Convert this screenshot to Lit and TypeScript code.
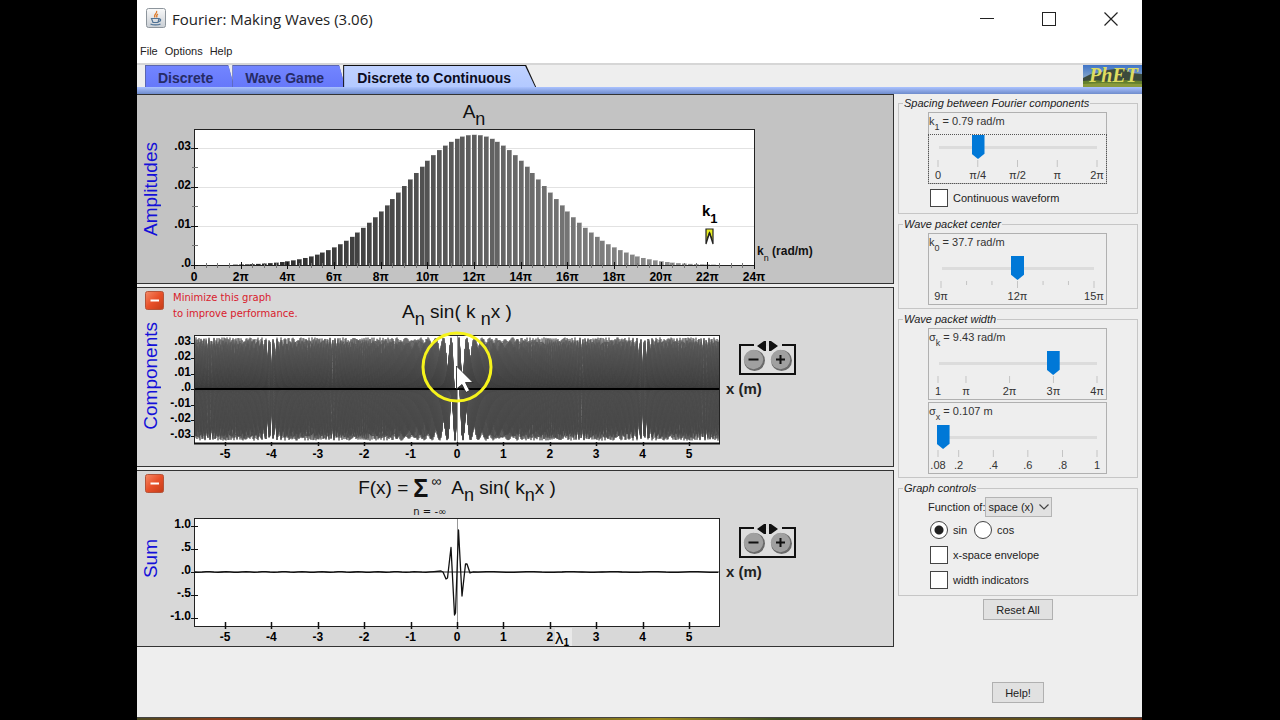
import { LitElement, html, svg, css, nothing } from "lit";
import { customElement, property } from "lit/decorators.js";

const COMPONENTS = 96;
const SIGMA = 12;
const CENTER = 48;
const PEAK = 0.0333;

const amplitude = (n: number) => PEAK * Math.exp(-((n - CENTER) ** 2) / (2 * SIGMA * SIGMA));
const shade = (n: number) => {
  const v = Math.round(26 + (n / COMPONENTS) * 136);
  return `rgb(${v},${v},${v})`;
};

interface Tick {
  at: number;
  text?: string;
}

@customElement("slider-box")
class SliderBox extends LitElement {
  @property() symbol = "";
  @property() sub = "";
  @property() reading = "";
  @property({ type: Number }) value = 0;
  @property({ attribute: false }) ticks: Tick[] = [];
  @property({ type: Boolean }) active = false;
  @property({ type: Boolean }) inset = false;

  static styles = css`
    :host { display: block; border: 1px solid #b0b0b0; font: 11px "Liberation Sans", Arial, sans-serif; color: #333; }
    .reading { display: block; height: 22px; line-height: 16px; white-space: nowrap; }
    .reading sub { font-size: 9px; line-height: 0; vertical-align: -5px; }
    .control { padding: 0 3px; }
    .control.inset { padding: 0 6px; }
    .control.active { outline: 1px dotted #555; }
    input {
      appearance: none; display: block; width: 100%; height: 24px; margin: 0;
      background: linear-gradient(#dcdcdc, #dcdcdc) center / calc(100% - 13px) 3px no-repeat;
      outline: none;
    }
    input::-webkit-slider-thumb {
      appearance: none; width: 13px; height: 24px; background: #0078d7;
      clip-path: polygon(0 0, 100% 0, 100% 78%, 50% 100%, 0 78%);
    }
    .scale { padding: 0 6px; }
    svg { display: block; width: 100%; height: 24px; overflow: visible; }
    line { stroke: #c4c4c4; }
    text { fill: #333; text-anchor: middle; }
  `;

  render() {
    return html`
      <label class="reading" for="range">${this.symbol}<sub>${this.sub}</sub> = ${this.reading}</label>
      <div class="control ${this.active ? "active" : ""} ${this.inset ? "inset" : ""}">
        <input id="range" type="range" min="0" max="100" step="0.1" .value=${String(this.value)} />
        <div class="scale">
          <svg aria-hidden="true">
            ${this.ticks.map(
              (t) => svg`<line x1="${t.at}%" x2="${t.at}%" y1="1" y2=${t.text ? 8 : 5}></line>
                ${t.text ? svg`<text x="${t.at}%" y="20">${t.text}</text>` : nothing}`
            )}
          </svg>
        </div>
      </div>
    `;
  }
}

@customElement("zoom-control")
class ZoomControl extends LitElement {
  static styles = css`
    :host { display: block; position: relative; width: 57px; height: 31px; }
    .frame { position: absolute; left: 0; top: -4px; }
    .buttons { position: relative; display: flex; justify-content: space-between; padding: 5px 4px 0; }
    button { width: 22px; height: 22px; padding: 0; border: 0; background: none; }
    button svg { display: block; }
  `;

  render() {
    const disc = (plus: boolean) => html`<svg width="22" height="22" viewBox="0 0 22 22">
      <circle cx="11.5" cy="11.5" r="10.5" fill="#6a6a6a"></circle>
      <circle cx="10.5" cy="10.5" r="9.7" fill="#a0a0a0"></circle>
      <path d=${plus ? "M6 10.500H15M10.500 6V15" : "M5.500 10.500H15.500"} stroke="#111" stroke-width="2"></path>
    </svg>`;
    return html`
      <svg class="frame" width="57" height="35" viewBox="0 0 57 35">
        <path d="M2 6H55V33H2Z" fill="#dedede"></path>
        <path d="M15 5H1V34H56V5H43" fill="none" stroke="#111" stroke-width="2"></path>
        <path d="M27 1V11H25L18 6L25 1ZM30 1H32L39 6L32 11H30Z" fill="#111"></path>
      </svg>
      <div class="buttons">
        <button aria-label="Zoom out">${disc(false)}</button>
        <button aria-label="Zoom in">${disc(true)}</button>
      </div>
    `;
  }
}

@customElement("amplitude-plot")
class AmplitudePlot extends LitElement {
  static styles = css`
    :host { display: block; }
    svg { display: block; overflow: visible; font: bold 12px "Liberation Sans", Arial, sans-serif; }
    .x { text-anchor: middle; }
    .y { text-anchor: end; }
  `;

  render() {
    const px = (n: number) => (n * 560) / 96;
    const py = (a: number) => 136 - a * 3910;
    return html`<svg width="560" height="154" role="img" aria-label="Amplitudes">
      <rect width="560" height="136" fill="#fff"></rect>
      ${[0.01, 0.02, 0.03].map((a) => svg`<path d="M0 ${Math.round(py(a)) + 0.5}H560" stroke="#e2e2e2"></path>`)}
      ${Array.from({ length: COMPONENTS }, (_, i) => i + 1).map((n) => {
        const top = py(amplitude(n));
        if (136 - top < 0.3) return nothing;
        return svg`<rect x=${Math.round(px(n)) - 2} y=${top} width="5" height=${136 - top} fill=${shade(n)}></rect>
          <rect x=${Math.round(px(n)) + 2} y=${top} width="1" height=${136 - top} fill="#fff" opacity=".35"></rect>`;
      })}
      <rect x=".5" y=".5" width="560" height="136" fill="none" stroke="#222"></rect>
      ${Array.from({ length: 49 }, (_, i) => i).map(
        (i) => svg`<path d="M${Math.round(px(i * 2)) + 0.5} ${i % 4 ? 134 : 133}V${i % 4 ? 139 : 140}" stroke=${i % 4 ? "#777" : "#111"}></path>`
      )}
      ${Array.from({ length: 13 }, (_, i) => i).map(
        (i) => svg`<text class="x" x=${px(i * 8)} y="152">${i ? `${i * 2}π` : "0"}</text>`
      )}
      ${[0, 0.005, 0.01, 0.015, 0.02, 0.025, 0.03].map(
        (a, i) => svg`<path d="M${i % 2 ? -2 : -3} ${Math.round(py(a)) + 0.5}H4" stroke=${i % 2 ? "#777" : "#111"}></path>`
      )}
      ${[".0", ".01", ".02", ".03"].map((t, i) => svg`<text class="y" x="-3" y=${py(i / 100) + 2}>${t}</text>`)}
      <text x="508" y="87" font-size="15">k<tspan dy="7" font-size="13">1</tspan></text>
      <path d="M512 100H519V115L515.500 104L512 115Z" fill="#e8ee20" stroke="#222" stroke-width="1.200"></path>
      <path d="M513 110L515.500 103L518 110" fill="none" stroke="#222"></path>
    </svg>`;
  }
}

@customElement("wave-plot")
class WavePlot extends LitElement {
  @property() kind: "components" | "sum" = "sum";

  static styles = css`
    :host { display: block; }
    svg { display: block; overflow: visible; font: bold 12px "Liberation Sans", Arial, sans-serif; }
    .x { text-anchor: middle; }
    .y { text-anchor: end; }
  `;

  private components() {
    const paths = [];
    for (let n = COMPONENTS; n >= 1; n--) {
      const a = amplitude(n) * 1550;
      if (a < 0.4) continue;
      let d = "";
      for (let x = 1; x <= 525; x++) {
        const y = 54 - a * Math.sin(((n * Math.PI) / 4) * ((x - 263) / 46.4));
        d += `${x > 1 ? "L" : "M"}${x} ${y.toFixed(1)}`;
      }
      const v = Math.round(50 + (n / COMPONENTS) * 40);
      paths.push(svg`<path d=${d} fill="none" stroke="rgb(${v},${v},${v})" stroke-width=".800"></path>`);
    }
    return svg`${paths}
      <defs>
        <linearGradient id="sheen" x1="0" y1="0" x2="0" y2="1">
          <stop offset="0" stop-color="#fff" stop-opacity=".12"></stop>
          <stop offset=".5" stop-color="#fff" stop-opacity="0"></stop>
          <stop offset=".51" stop-color="#fff" stop-opacity=".08"></stop>
          <stop offset="1" stop-color="#fff" stop-opacity="0"></stop>
        </linearGradient>
      </defs>
      <rect width="526" height="108" fill="url(#sheen)"></rect>
      <path d="M263.500 1V108" stroke="#999"></path>
      <path d="M0 54H526" stroke="#000" stroke-width="2"></path>`;
  }

  private sum() {
    let left = "M0 54";
    for (let x = 4; x < 244; x += 4) left += `L${x} ${(54 + Math.sin(x * 12.9) * 0.4).toFixed(1)}`;
    let right = "";
    for (let x = 284; x <= 526; x += 4) right += `L${x} ${(54 + Math.sin(x * 7.7) * 0.4).toFixed(1)}`;
    return svg`<path d="M263.500 1V108" stroke="#999"></path>
      <path d="M0 54H526" stroke="#222"></path>
      <path d="${left}L247 53L249 54L252 61L253.500 60L257 29.500L260.500 97L261.500 95L264.500 12L268 78L271.500 46L273 46L276 55L279 54${right}"
        fill="none" stroke="#111" stroke-width="1.300" stroke-linejoin="round"></path>`;
  }

  render() {
    const comp = this.kind === "components";
    const yTicks = comp
      ? [".03", ".02", ".01", ".0", "-.01", "-.02", "-.03"].map((t, i) => ({ t, y: 54 - (3 - i) * 15.5 }))
      : ["1.0", ".5", ".0", "-.5", "-1.0"].map((t, i) => ({ t, y: 54 - (2 - i) * 23 }));
    return html`<svg width="526" height="128" role="img" aria-label=${this.kind}>
      <rect width="526" height="108" fill="#fff"></rect>
      ${comp ? this.components() : this.sum()}
      <rect x=".5" y=".5" width="525" height="108" fill="none" stroke="#222"></rect>
      ${comp ? svg`<path d="M0 108.500H526" stroke="#111" stroke-width="2"></path>` : nothing}
      ${yTicks.map(
        ({ t, y }) => svg`<path d="M-3 ${Math.round(y) + 0.5}H${comp ? 0 : 4}" stroke="#111"></path>
          <text class="y" x="-3" y=${y + 2}>${t}</text>`
      )}
      ${[-5, -4, -3, -2, -1, 0, 1, 2, 3, 4, 5].map(
        (v) => svg`<path d="M${Math.round(263 + v * 46.4) + 0.5} ${comp ? 107 : 104}V111" stroke="#111" stroke-width="1.500"></path>
          <text class="x" x=${263 + v * 46.4} y="123">${v}</text>`
      )}
      ${comp
        ? svg`<circle cx="263" cy="32" r="34" fill="none" stroke="#f6f31c" stroke-width="3"></circle>
          <path d="M262.500 31V54L268 49.500L272 57.500L275.500 55.500L271.500 47.500H279Z" fill="#fff" stroke="#222" stroke-width=".800"></path>`
        : svg`<rect x="361" y="110" width="17" height="18" fill="#e9e9e9"></rect>
          <text x="361" y="126" font-size="17" font-weight="400">λ<tspan font-size="10" font-weight="700" dy="2">1</tspan></text>`}
    </svg>`;
  }
}

const PI_STEPS: Tick[] = [
  { at: 0, text: "0" },
  { at: 25, text: "π/4" },
  { at: 50, text: "π/2" },
  { at: 75, text: "π" },
  { at: 100, text: "2π" },
];
const CENTER_STEPS: Tick[] = [
  { at: 0, text: "9π" },
  { at: 16.7 },
  { at: 33.3 },
  { at: 50, text: "12π" },
  { at: 66.7 },
  { at: 83.3 },
  { at: 100, text: "15π" },
];
const SIGMA_K_STEPS: Tick[] = [
  { at: 0, text: "1" },
  { at: 17.6, text: "π" },
  { at: 45, text: "2π" },
  { at: 72.6, text: "3π" },
  { at: 100, text: "4π" },
];
const SIGMA_X_STEPS: Tick[] = [
  { at: 0, text: ".08" },
  { at: 13, text: ".2" },
  { at: 34.8, text: ".4" },
  { at: 56.5, text: ".6" },
  { at: 78.3, text: ".8" },
  { at: 100, text: "1" },
];

@customElement("app-root")
class AppRoot extends LitElement {
  static styles = css`
    :host {
      display: flex; flex-direction: column; min-height: 100vh; box-sizing: border-box;
      padding: 0 138px 0 137px; background: #000;
      font: 11px "Liberation Sans", Arial, sans-serif; color: #222;
    }
    * { box-sizing: border-box; }
    .window { flex: 1; display: flex; flex-direction: column; background: #eee; }
    .desktop {
      height: 3px; border-top: 1px solid #444;
      background: linear-gradient(90deg, #4b4a22, #8a3a18 8%, #3a4a1c 22%, #54521e 38%, #a08a1c 52%, #3a4a20 64%, #7a3a18 78%, #5a561c 90%, #6a2a14);
    }

    .titlebar { display: flex; align-items: center; height: 38px; padding-left: 8px; background: #fff; }
    .titlebar h1 { flex: 1; margin: 0 0 0 5px; font: 400 15px "Open Sans", "Noto Sans", sans-serif; color: #222; }
    .winbtn { display: grid; place-items: center; width: 62px; height: 36px; padding: 0; border: 0; background: none; }
    .menubar { display: flex; gap: 7px; height: 27px; padding: 0 3px; align-items: center; background: #fff; border-bottom: 2px solid #d6d6d6; }
    .menubar button { padding: 0; border: 0; background: none; font: inherit; color: #222; }

    .tabs { display: flex; height: 22px; padding-left: 8px; }
    .tab {
      position: relative; isolation: isolate; height: 22px; margin: 0 0 0 -2px; padding: 3px 21px 0 13px; border: 0;
      font: bold 14px "Liberation Sans", Arial, sans-serif; color: #262b66; background: #5a66b0;
      clip-path: polygon(0 0, calc(100% - 6px) 0, 100% 100%, 0 100%);
    }
    .tab:first-child { margin-left: 0; }
    .tab::before {
      content: ""; position: absolute; inset: 1px 0 0 1px; z-index: -1;
      background: linear-gradient(#7285ff, #6678fa);
    }
    .tab.on {
      background: #111; color: #0c0c20; padding: 3px 25px 0 14px;
      clip-path: polygon(0 0, calc(100% - 10px) 0, 100% 100%, 0 100%);
    }
    .tab.on::before {
      inset: 1px 1px 0 1px; background: linear-gradient(#c0d2ff, #b3c9ff);
      clip-path: polygon(0 0, calc(100% - 10px) 0, 100% 100%, 0 100%);
    }
    .logo { margin-left: auto; display: block; }
    .band { height: 7px; background: linear-gradient(#aac2ff, #6f8ccc); }

    .body { flex: 1; display: flex; }
    .graphs { flex: 1; min-width: 0; display: flex; flex-direction: column; gap: 3px; }
    .panel {
      display: grid; grid-template-columns: 36px 21px max-content 1fr; grid-template-rows: 47px max-content;
      background: #d8d8d8; border: 1px solid #333; border-left: 0;
    }
    .panel.amp { grid-template-rows: 34px max-content; background: #c3c3c3; }
    .panel.comp { padding-bottom: 3px; }
    .name {
      grid-column: 1; grid-row: 1 / 3; justify-self: center; align-self: center; margin: 0;
      writing-mode: vertical-rl; transform: rotate(180deg);
      font: 400 19px "Liberation Sans", Arial, sans-serif; line-height: 20px; color: #1410d8; padding-left: 8px;
    }
    .min { grid-column: 1; grid-row: 1; align-self: start; z-index: 1; margin: 3px 0 0 8px; width: 20px; height: 20px; padding: 0; border: 0; background: none; }
    .min svg { display: block; }
    .note {
      grid-column: 2 / 4; grid-row: 1; margin: 2px 0 0; font: 10px "DejaVu Sans", sans-serif;
      line-height: 16px; color: #d8202c;
    }
    .formula {
      grid-column: 3; grid-row: 1; justify-self: center; display: flex; margin: 0; color: #111;
      font: 400 19px "Liberation Sans", Arial, sans-serif; line-height: 34px; white-space: pre;
    }
    .comp .formula { line-height: 47px; }
    .formula sub { line-height: 0; font-size: 18px; vertical-align: -7px; }
    .sigma { display: grid; grid-template-columns: 18px 14px; grid-template-rows: 34px 14px; margin: 0 6px 0 5px; }
    .sigma .sign { font-size: 25px; font-weight: 700; }
    .sigma .top { font-size: 14px; line-height: 20px; }
    .sigma .from { grid-column: 1 / 3; font: 10px "DejaVu Sans", sans-serif; line-height: 14px; }
    amplitude-plot, wave-plot { grid-column: 3; grid-row: 2; }
    .side-cell { grid-column: 4; grid-row: 2; }
    .kn { margin: 113px 0 0 3px; font-weight: 700; font-size: 12px; line-height: 18px; color: #111; white-space: nowrap; }
    .kn sub { font-size: 9px; font-weight: 400; line-height: 0; vertical-align: -6px; }
    .side-cell zoom-control { margin: 9px 0 4px 19px; }
    .xm { margin: 0 0 0 6px; font-weight: 700; font-size: 15px; line-height: 20px; color: #222; }

    .side { width: 248px; padding: 2px 4px 14px; display: flex; flex-direction: column; gap: 3px; }
    fieldset { margin: 0; min-width: 0; padding: 2px 30px 3px 29px; border: 1px solid #c6c6c6; }
    legend { margin-left: -25px; padding: 0 1px; font-style: italic; font-size: 11px; line-height: 14px; white-space: nowrap; }
    .stack { display: grid; gap: 2px; }
    .row { display: flex; align-items: center; gap: 5px; height: 25px; padding-left: 2px; white-space: nowrap; }
    slider-box + .row { margin-top: 1px; }
    .row input { appearance: none; width: 18px; height: 18px; margin: 0; background: #fff; border: 1px solid #444; }
    .row input[type="radio"] { border-radius: 50%; }
    .row input[type="radio"]:checked { background: radial-gradient(circle, #222 4px, #fff 5px); }
    .row .cos { margin-left: 2px; }
    .pick { display: flex; align-items: center; height: 20px; white-space: nowrap; }
    .combo { position: relative; }
    select { appearance: none; display: block; height: 20px; width: 67px; margin: 0; padding: 0 0 0 2px; border: 1px solid #b4b4b4; border-radius: 0; background: #e1e1e1; font: inherit; color: inherit; }
    .combo svg { position: absolute; right: 3px; top: 7px; pointer-events: none; }
    .push { align-self: center; height: 21px; padding: 0 12px; border: 1px solid #b0b0b0; background: #e1e1e1; font: inherit; color: #222; }
    .help { margin-top: auto; }
  `;

  private minimize() {
    return html`<button class="min" aria-label="Minimize graph">
      <svg width="20" height="20" viewBox="0 0 20 20">
        <defs>
          <linearGradient id="red" x1="0" y1="0" x2="1" y2="1">
            <stop offset="0" stop-color="#f58a66"></stop>
            <stop offset=".5" stop-color="#e8502a"></stop>
            <stop offset="1" stop-color="#c43c18"></stop>
          </linearGradient>
        </defs>
        <rect x=".5" y=".5" width="18" height="18" rx="2" fill="url(#red)" stroke="#b4543a"></rect>
        <path d="M5.500 9.500H14" stroke="#fff" stroke-width="2"></path>
      </svg>
    </button>`;
  }

  render() {
    return html`
      <div class="window">
        <header class="titlebar">
          <svg width="22" height="22" viewBox="0 0 22 22" aria-hidden="true">
            <defs>
              <linearGradient id="tile" x1="0" y1="0" x2="0" y2="1">
                <stop offset="0" stop-color="#fafafa"></stop>
                <stop offset="1" stop-color="#c9ced4"></stop>
              </linearGradient>
            </defs>
            <rect x="1.500" y=".500" width="19" height="19" rx="2" fill="url(#tile)" stroke="#8d959c"></rect>
            <path d="M11.500 3C13 5 8 6.500 10 9.500M13 6C11 7 11.500 8 12 9.500" fill="none" stroke="#dd7a2a" stroke-width="1.300"></path>
            <path d="M6.500 10.500H14L13 14.500H8ZM14 11C16.500 10.500 16 13.500 13.500 13.500M5.500 16C8 17.300 13 17.300 15.500 16" fill="none" stroke="#4f7396" stroke-width="1.200"></path>
          </svg>
          <h1>Fourier: Making Waves (3.06)</h1>
          <button class="winbtn" aria-label="Minimize"><svg width="14" height="14"><path d="M0 6.500H14" stroke="#222"></path></svg></button>
          <button class="winbtn" aria-label="Maximize"><svg width="14" height="14"><rect x=".5" y=".5" width="13" height="13" fill="none" stroke="#222"></rect></svg></button>
          <button class="winbtn" aria-label="Close"><svg width="14" height="14"><path d="M.500 .500L13.500 13.500M13.500 .500L.500 13.500" stroke="#222" stroke-width="1.200"></path></svg></button>
        </header>
        <nav class="menubar">
          <button>File</button>
          <button>Options</button>
          <button>Help</button>
        </nav>
        <div class="tabs">
          <button class="tab">Discrete</button>
          <button class="tab">Wave Game</button>
          <button class="tab on">Discrete to Continuous</button>
          <svg class="logo" width="59" height="22" viewBox="0 0 59 22">
            <defs>
              <linearGradient id="sky" x1="0" y1="0" x2="0" y2="1">
                <stop offset="0" stop-color="#3f74c8"></stop>
                <stop offset=".6" stop-color="#86a6c8"></stop>
              </linearGradient>
            </defs>
            <rect width="59" height="22" fill="url(#sky)"></rect>
            <path d="M0 13L8 9L16 8L24 5L32 4L40 3L48 8L59 9V22H0Z" fill="#3c4a3c"></path>
            <path d="M0 16L12 15L28 17L42 15L59 16V22H0Z" fill="#64802e"></path>
            <path d="M0 19L20 18L59 19V22H0Z" fill="#8a9a3c"></path>
            <text x="6" y="17" font-family="Liberation Serif, serif" font-style="italic" font-weight="700" font-size="20" fill="#dedc60">PhET</text>
          </svg>
        </div>
        <div class="band"></div>
        <div class="body">
          <main class="graphs">
            <section class="panel amp">
              <h2 class="name">Amplitudes</h2>
              <p class="formula"><span>A<sub>n</sub></span></p>
              <amplitude-plot></amplitude-plot>
              <div class="side-cell"><p class="kn">k<sub>n</sub> (rad/m)</p></div>
            </section>
            <section class="panel comp">
              ${this.minimize()}
              <h2 class="name">Components</h2>
              <p class="note">Minimize this graph<br />to improve performance.</p>
              <p class="formula"><span>A<sub>n</sub> sin( k <sub>n</sub>x )</span></p>
              <wave-plot kind="components"></wave-plot>
              <div class="side-cell"><zoom-control></zoom-control><p class="xm">x (m)</p></div>
            </section>
            <section class="panel">
              ${this.minimize()}
              <h2 class="name">Sum</h2>
              <p class="formula"><span>F(x) =</span><span class="sigma"><span class="sign">Σ</span><span class="top">∞</span><span class="from">n = -∞</span></span><span>A<sub>n</sub> sin( k<sub>n</sub>x )</span></p>
              <wave-plot kind="sum"></wave-plot>
              <div class="side-cell"><zoom-control></zoom-control><p class="xm">x (m)</p></div>
            </section>
          </main>
          <aside class="side">
            <fieldset>
              <legend>Spacing between Fourier components</legend>
              <slider-box symbol="k" sub="1" reading="0.79 rad/m" .value=${25} .ticks=${PI_STEPS} active></slider-box>
              <label class="row"><input type="checkbox" />Continuous waveform</label>
            </fieldset>
            <fieldset>
              <legend>Wave packet center</legend>
              <slider-box symbol="k" sub="0" reading="37.7 rad/m" .value=${50} .ticks=${CENTER_STEPS} inset></slider-box>
            </fieldset>
            <fieldset>
              <legend>Wave packet width</legend>
              <div class="stack">
                <slider-box symbol="σ" sub="k" reading="9.43 rad/m" .value=${72.6} .ticks=${SIGMA_K_STEPS}></slider-box>
                <slider-box symbol="σ" sub="x" reading="0.107 m" .value=${2.9} .ticks=${SIGMA_X_STEPS}></slider-box>
              </div>
            </fieldset>
            <fieldset>
              <legend>Graph controls</legend>
              <div class="pick">
                <label for="domain">Function of:</label>
                <span class="combo">
                  <select id="domain"><option>space (x)</option></select>
                  <svg width="10" height="6"><path d="M.500 .500L5 5L9.500 .500" fill="none" stroke="#444" stroke-width="1.200"></path></svg>
                </span>
              </div>
              <div class="row">
                <input id="sin" type="radio" name="wave" checked /><label for="sin">sin</label>
                <input id="cos" class="cos" type="radio" name="wave" /><label for="cos">cos</label>
              </div>
              <label class="row"><input type="checkbox" />x-space envelope</label>
              <label class="row"><input type="checkbox" />width indicators</label>
            </fieldset>
            <button class="push">Reset All</button>
            <button class="push help">Help!</button>
          </aside>
        </div>
      </div>
      <div class="desktop"></div>
    `;
  }
}
